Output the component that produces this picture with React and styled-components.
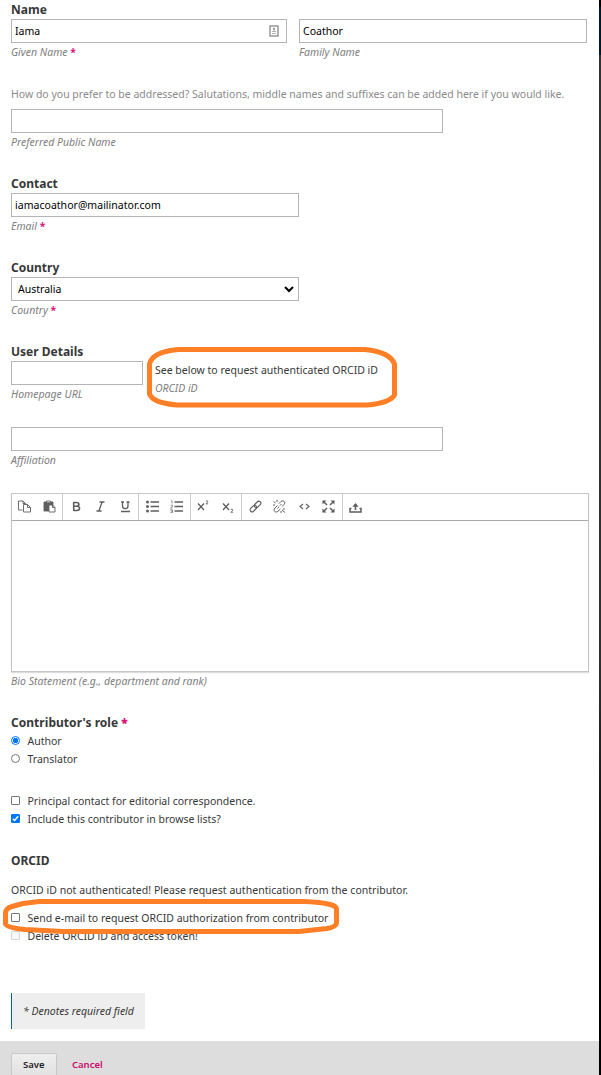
import React from 'react';
import styled, { createGlobalStyle, css } from 'styled-components';

const Global = createGlobalStyle`
  * { box-sizing: border-box; }
  html, body { margin: 0; background: #fff; overflow: hidden; }
  body { font-family: "Noto Sans", "Open Sans", sans-serif; font-size: 10.5px; line-height: 18px; color: #383838; }
`;
const Page = styled.div`
  position: relative;
  display: flex;
  width: 601px;
  height: 1075px;
  overflow: hidden;
`;
const Main = styled.main`
  width: 599px;
  display: flex;
  flex-direction: column;
`;
const Edge = styled.div`
  flex: 1;
  background: linear-gradient(#000 0 7px, #00182b 7px 55px, #333 55px, #303030 660px, #202020 760px, #0c0c0c 870px, #000 920px);
`;
const Form = styled.form`
  display: flex;
  flex-direction: column;
  gap: 24px;
  height: 1041px;
  flex: none;
  padding: 1px 10px 0 11px;
`;
const Section = styled.section`
  display: flex;
  flex-direction: column;
  margin-top: ${p => p.$top || 0}px;
`;
const Row = styled.div`
  display: flex;
  gap: 12px;
`;
const Text = styled.span`
  display: block;
  white-space: nowrap;
  letter-spacing: ${p => p.$track || 0}px;
`;
const Heading = styled(Text).attrs({ as: 'h3' })`
  margin: 0;
  font-size: 12px;
  font-weight: 700;
  color: #383838;
`;
const Label = styled(Text)`
  font-style: italic;
  color: #7e7e7e;
`;
const Description = styled(Text)`
  color: #8a8a8a;
  margin-bottom: 6px;
`;
const Star = styled.b`
  color: #dc1478;
  font-style: normal;
`;
const Field = styled.div`
  width: ${p => p.$width}px;
`;
const Box = styled.div`
  display: flex;
  align-items: center;
  justify-content: space-between;
  height: 24px;
  border: 1px solid #b5b5b5;
  padding: 0 ${p => p.$select ? '3px 0 6px' : '7px 0 3px'};
  color: #000;
`;
const Editor = styled.div`
  width: 578px;
  height: 179px;
  border: 1px solid #c5c5c5;
  box-shadow: 0 1px 1px #ddd;
`;
const Toolbar = styled.div`
  display: flex;
  height: 27px;
  border-bottom: 1px solid #aaa;
`;
const Group = styled.div`
  display: flex;
  width: ${p => p.$width}px;
  padding: 0 0 1px ${p => p.$pad}px;
  gap: 9.5px;
  align-items: center;
  border-right: ${p => p.$last ? 0 : 1}px solid #ccc;
`;
const Icon = styled.svg`
  flex: none;
  width: ${p => p.$w || 15}px;
  height: ${p => p.$h || 15}px;
  fill: none;
  stroke: #5e5e5e;
  stroke-width: 0.9;
  overflow: visible;
`;
const Option = styled.label`
  display: flex;
  align-items: center;
  height: 18px;
`;
const Mark = styled.span`
  width: 9px;
  height: 9px;
  flex: none;
  margin: 0 7.5px 1px 0;
  display: flex;
  background: #fff;
  border: 1px solid #767676;
  border-radius: ${p => p.$radio ? '50%' : '1px'};
  ${p => p.$checked && p.$radio && css`border-color: #0075ff; background: radial-gradient(circle, #0075ff 0 2.5px, #fff 3px);`}
  ${p => p.$checked && !p.$radio && css`border-color: #0075ff; background: #0075ff;`}
  ${p => p.$disabled && css`border-color: #d5d5d5; background: #f8f8f8;`}
  svg { width: 7px; height: 7px; stroke: #fff; stroke-width: 1.4; fill: none; }
`;
const Note = styled.p`
  width: 134px;
  height: 36px;
  margin: 24px 0 0;
  padding: 9px 0 0 11px;
  background: #eee;
  border-left: 1px solid #006798;
  font-style: italic;
`;
const Footer = styled.footer`
  display: flex;
  align-items: flex-start;
  gap: 15px;
  flex: 1;
  padding: 12px 0 0 11px;
  background: #ddd;
  font-weight: 700;
`;
const Save = styled.div`
  width: 46px;
  height: 26px;
  padding: 2px 0 0 11px;
  border: 1px solid #c8c8c8;
  border-radius: 2px;
  background: linear-gradient(#eee, #e0e0e0);
  color: #222;
  font-size: 9.5px;
  font-weight: 600;
`;
const Cancel = styled.a`
  padding-top: 3px;
  color: #d00a6c;
  font-size: 9.5px;
  font-weight: 600;
`;
const Outline = styled.svg`
  position: absolute;
  left: ${p => p.$x}px;
  top: ${p => p.$y}px;
  fill: none;
  stroke: #ff7f27;
  stroke-width: 5;
  stroke-linejoin: round;
  overflow: visible;
`;

const Input = ({ width, label, required, value, track, children, select }) => (
  <Field $width={width}>
    <Box $select={select}><Text $track={track}>{value}</Text>{children}</Box>
    <Label>{label}{required && <> <Star>*</Star></>}</Label>
  </Field>
);
const Choice = ({ children, ...state }) => (
  <Option>
    <Mark {...state}>{state.$checked && !state.$radio && <svg viewBox="0 0 7 7"><path d="M.8 3.8 2.6 5.5 6.2 1.2" /></svg>}</Mark>
    <Text>{children}</Text>
  </Option>
);

const icons = {
  copy: <path d="M5.500 11H1.500V2h4.500l2.500 2.500v1M6 2v2.500h2.500M6.500 5.500h4l3 3v4.500h-7ZM10.500 5.500v3h3" />,
  paste: <><path d="M2 3h9v4H6.500v5H2Z" fill="#5e5e5e" /><path d="M4.500 2h4v1.800h-4ZM7 6h3.500L13 8.500V13H7ZM10.500 6v2.500H13" fill="#fff" /></>,
  bold: <path d="M4.700 3v9M4.700 3.500h2.800c3.200 0 3.200 3.700 0 3.700H4.700h3.200c3.500 0 3.500 4.300 0 4.300H4.700" strokeWidth="1.6" />,
  italic: <path d="M6.500 3h5M3.500 12h5M9.100 3 5.900 12" strokeWidth="1.3" />,
  underline: <path d="M3 3h3M8.500 3h3M4.500 3v4c0 3.500 5.500 3.500 5.500 0V3M3 12.500h9" strokeWidth="1.3" />,
  bullets: <><path d="M5.500 3H14M5.500 7.500H14M5.500 12H14" strokeWidth="1.3" /><g fill="#5e5e5e" stroke="none"><circle cx="2.500" cy="3" r="1.500" /><circle cx="2.500" cy="7.500" r="1.500" /><circle cx="2.500" cy="12" r="1.500" /></g></>,
  numbers: <><path d="M5.500 3H14M5.500 7.500H14M5.500 12H14" strokeWidth="1.3" /><path d="M2 1.800h1v2.700M1.500 6.300h2v1l-2 1.700h2M1.500 10.800h2v2.700h-2M1.500 12h2" strokeWidth=".7" /></>,
  sup: <><path d="m2 4.500 6 6.500m0-6.500-6 6.500" strokeWidth="1.3" /><path d="M9.800 2h1.900v1.300l-1.900 1.500h2.300" strokeWidth=".8" /></>,
  sub: <><path d="m2 4.500 6 6.500m0-6.500-6 6.500" strokeWidth="1.3" /><path d="M9.800 10.500h1.900v1.300l-1.900 1.500h2.300" strokeWidth=".8" /></>,
  link: <g transform="rotate(-45 7.500 7.500)" strokeWidth="1.1"><rect x=".8" y="5.500" width="7.500" height="4" rx="2" /><rect x="6.700" y="5.500" width="7.500" height="4" rx="2" /></g>,
  unlink: <path d="M7 4.500 9 2.500c2.500-2 5 1 3 3L10 7.500M5.500 6.500 3 9c-2.500 2.500.8 5.500 3 3.200L8.500 10M5.500 9.500l1.700-1.700M8 6.500 9.500 5M1.500 2.500l2 1.500M5 .8V3M1 6h2M10 11l3 2.500M13 10h-2M9 12v2" strokeWidth="1" />,
  code: <path d="M6 5 3 7.500 6 10M9 5l3 2.500L9 10" strokeWidth="1.1" />,
  full: <><path d="m2 2 4 4M13 2 9 6M2 13l4-4M13 13 9 9" strokeWidth="1.5" /><path d="M1.500 1.500h4l-4 4ZM13.500 1.500h-4l4 4ZM1.500 13.500h4l-4-4ZM13.500 13.500h-4l4-4Z" fill="#5e5e5e" stroke="none" /></>,
  upload: <><path d="M3.500 9.500H2v3.500h11V9.500h-1.500" strokeWidth="1.5" /><path d="M7.500 5v6" strokeWidth="1.6" /><path d="m4.400 7.800 3.100-3.800 3.100 3.800Z" fill="#5e5e5e" stroke="none" /></>,
};
const groups = [
  { w: 51, pad: 5, names: ['copy', 'paste'] },
  { w: 76, pad: 5.5, names: ['bold', 'italic', 'underline'] },
  { w: 52, pad: 5.5, names: ['bullets', 'numbers'] },
  { w: 51, pad: 5, names: ['sup', 'sub'] },
  { w: 101, pad: 5.5, names: ['link', 'unlink', 'code', 'full'] },
  { w: 40, pad: 5, names: ['upload'], last: true },
];

export default function App() {
  return (
    <Page>
      <Global />
      <Main>
        <Form>
          <Section>
            <Heading>Name</Heading>
            <Row>
              <Input width={276} value="Iama" label="Given Name" required>
                <Icon $w={10} $h={12} viewBox="0 0 10 12"><path d="M1 1h8v10H1Z" stroke="#999" strokeWidth="1.5" /><circle cx="5" cy="4" r="1.200" fill="#999" stroke="none" /><path d="M3 6.500h4M3 8.500h4M5 4v3" stroke="#aaa" /></Icon>
              </Input>
              <Input width={288} value="Coathor" label="Family Name" />
            </Row>
          </Section>
          <Section>
            <Description>How do you prefer to be addressed? Salutations, middle names and suffixes can be added here if you would like.</Description>
            <Input width={432} label="Preferred Public Name" />
          </Section>
          <Section>
            <Heading>Contact</Heading>
            <Input width={288} value="iamacoathor@mailinator.com" track={0.03} label="Email" required />
          </Section>
          <Section>
            <Heading>Country</Heading>
            <Input width={288} value="Australia" label="Country" required select>
              <Icon $w={12} $h={12} viewBox="0 0 12 12"><path d="m2 4 4 4 4-4" stroke="#000" strokeWidth="2" /></Icon>
            </Input>
          </Section>
          <Section>
            <Heading>User Details</Heading>
            <Row>
              <Input width={132} label="Homepage URL" />
              <Field $width={260}>
                <Text>See below to request authenticated ORCID iD</Text>
                <Label>ORCID iD</Label>
              </Field>
            </Row>
          </Section>
          <Section><Input width={432} label="Affiliation" /></Section>
          <Section>
            <Editor>
              <Toolbar>
                {groups.map(g => (
                  <Group key={g.names[0]} $width={g.w} $pad={g.pad} $last={g.last}>
                    {g.names.map(n => <Icon key={n} viewBox="0 0 15 15">{icons[n]}</Icon>)}
                  </Group>
                ))}
              </Toolbar>
            </Editor>
            <Label>Bio Statement (e.g., department and rank)</Label>
          </Section>
          <Section>
            <Heading $track={0.04}>Contributor's role <Star>*</Star></Heading>
            <Choice $radio $checked>Author</Choice>
            <Choice $radio>Translator</Choice>
          </Section>
          <Section>
            <Choice>Principal contact for editorial correspondence.</Choice>
            <Choice $checked>Include this contributor in browse lists?</Choice>
          </Section>
          <Section>
            <Heading>ORCID</Heading>
            <Section $top={11}><Text $track={0.032}>ORCID iD not authenticated! Please request authentication from the contributor.</Text></Section>
            <Section $top={10}>
              <Choice>Send e-mail to request ORCID authorization from contributor</Choice>
              <Choice $disabled>Delete ORCID iD and access token!</Choice>
            </Section>
          </Section>
          <Note><Text>* Denotes required field</Text></Note>
        </Form>
        <Footer><Save>Save</Save><Cancel>Cancel</Cancel></Footer>
      </Main>
      <Edge />
      <Outline $x={147} $y={346} width="250" height="62"><path d="M31 3.500H218Q243 6 247.500 18V49Q243 57 220 59H30Q6 57 2.500 48V18Q5 6 31 3.500Z" /></Outline>
      <Outline $x={3} $y={899} width="336" height="36"><path d="M36 2.500H300Q318 3 327 5.500Q333 7 333.500 10V24Q333 28 324 29.500L296 32.500H60L22 30.500Q5 29 2.500 25V14Q3 9 9 7.500L20 4.500Z" /></Outline>
    </Page>
  );
}
